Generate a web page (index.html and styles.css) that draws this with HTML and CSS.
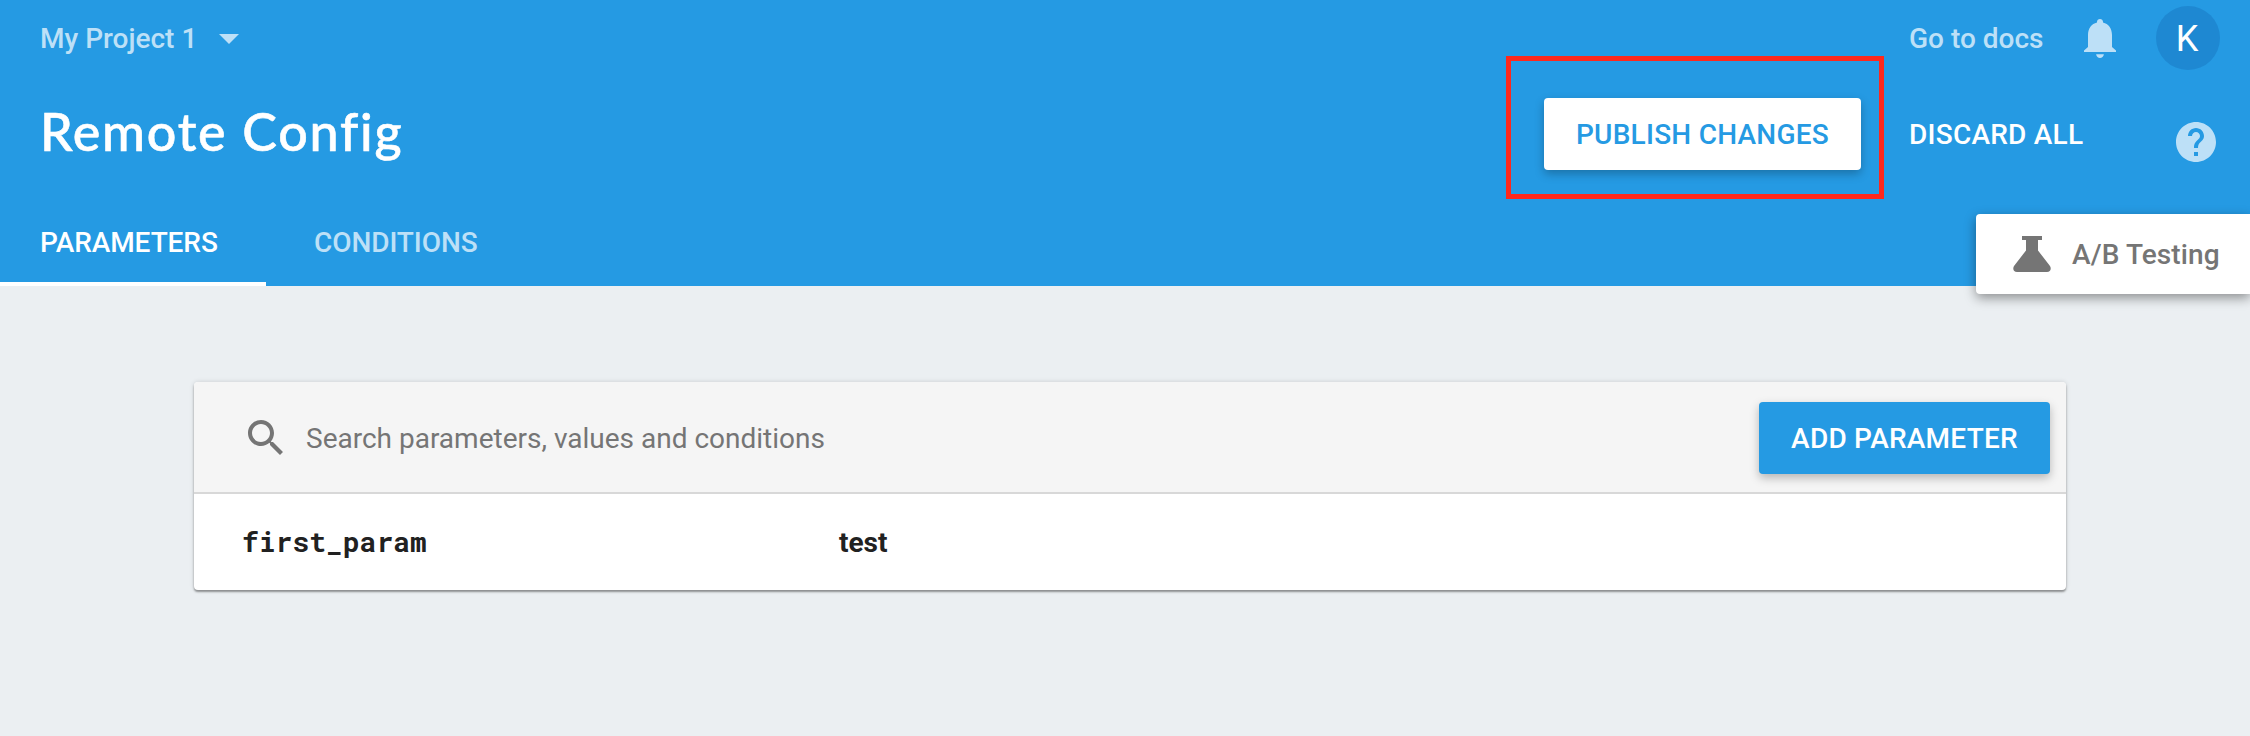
FILE: index.html
```html
<!DOCTYPE html>
<html lang="en">
<head>
<meta charset="utf-8">
<title>Remote Config</title>
<link rel="stylesheet" href="styles.css">
</head>
<body>
<header class="header">
  <div class="topbar">
    <div class="project"><span class="project-name">My Project 1</span><svg class="caret" viewBox="0 0 20 10"><path d="M0 0h20L10 10z"/></svg></div>
    <nav class="account">
      <a class="docs">Go to docs</a>
      <svg class="bell" viewBox="0 0 24 24"><path d="M12 22c.9 0 1.850-.8 1.950-1.850h-3.900C10.150 21.200 11.100 22 12 22zm6-5.500V10.500C18 7.250 16.250 4.900 13.500 4.250V3.900c0-.83-.67-1.400-1.500-1.400s-1.500.57-1.500 1.400v.35C7.750 4.900 6 7.250 6 10.500v6L4 18.250V19h16v-.750z"/></svg>
      <span class="avatar">K</span>
    </nav>
  </div>
  <div class="titlebar">
    <h1 class="title">Remote Config</h1>
    <div class="actions">
      <div class="highlight"><button class="button publish">PUBLISH CHANGES</button></div>
      <button class="discard">DISCARD ALL</button>
      <svg class="help" viewBox="0 0 24 24"><path d="M12 2C6.480 2 2 6.480 2 12s4.480 10 10 10 10-4.480 10-10S17.520 2 12 2zm1 17h-2v-2h2v2zm2.070-7.750l-.9.920C13.450 12.900 13 13.500 13 15h-2v-.5c0-1.100.45-2.100 1.170-2.830l1.240-1.260c.37-.36.59-.86.59-1.410 0-1.100-.9-2-2-2s-2 .9-2 2H8c0-2.210 1.790-4 4-4s4 1.790 4 4c0 .88-.36 1.680-.93 2.250z"/></svg>
    </div>
  </div>
  <nav class="tabs">
    <a class="tab active">PARAMETERS</a>
    <a class="tab">CONDITIONS</a>
  </nav>
  <aside class="ab">
    <svg class="flask" viewBox="0 0 38 36"><path d="M9 0h20v4h-4v10.500l11.800 15.200c2 2.800.6 6.300-2.800 6.300H4c-3.400 0-4.800-3.500-2.800-6.300L13 14.500V4H9z"/></svg>
    <span class="ab-label">A/B Testing</span>
  </aside>
</header>
<main class="main">
  <section class="card">
    <div class="toolbar">
      <svg class="search" viewBox="0 0 24 24"><path d="M15.500 14h-.79l-.28-.27C15.410 12.590 16 11.110 16 9.500 16 5.910 13.090 3 9.500 3S3 5.910 3 9.500 5.910 16 9.500 16c1.610 0 3.090-.59 4.230-1.570l.27.28v.79l5 4.990L20.490 19l-4.990-5zm-6 0C7.010 14 5 11.990 5 9.500S7.010 5 9.500 5 14 7.010 14 9.500 11.990 14 9.500 14z"/></svg>
      <span class="placeholder">Search parameters, values and conditions</span>
      <button class="button add">ADD PARAMETER</button>
    </div>
    <div class="row">
      <span class="key">first_param</span>
      <span class="value">test</span>
    </div>
  </section>
</main>
</body>
</html>
```

FILE: styles.css
```css
* { box-sizing: border-box; }
body {
  margin: 0;
  height: 736px;
  overflow: hidden;
  background: #ebeff2;
  font-family: Roboto, sans-serif;
  font-size: 28px;
  line-height: 36px;
  font-weight: 500;
}
svg { display: block; flex: none; fill: currentColor; }
button { font: inherit; border: 0; padding: 2px 0 0; background: none; white-space: nowrap; letter-spacing: .24px; }

.header {
  position: relative;
  display: flex;
  flex-direction: column;
  height: 286px;
  background: #259ae3;
  color: #fff;
}
.topbar { display: flex; justify-content: space-between; height: 76px; padding: 0 30px 0 40px; }
.project, .account { display: flex; align-items: center; color: #bde0f7; }
.project { gap: 22px; }
.project-name, .docs { padding-top: 2px; }
.caret { width: 20px; height: 10px; margin-top: 2px; }
.account { width: 311px; }
.docs { width: 167px; white-space: nowrap; }
.bell { width: 48px; height: 48px; }
.avatar {
  width: 64px;
  height: 64px;
  margin-left: 32px;
  padding-right: 2px;
  border-radius: 50%;
  background: #1e88d2;
  color: #fff;
  font-size: 36px;
  font-weight: 400;
  line-height: 66px;
  text-align: center;
}
.titlebar { display: flex; justify-content: space-between; height: 122px; padding: 0 30px 0 40px; }
.title {
  margin: 25px 0 0;
  font: 500 52px/60px Lato, sans-serif;
  letter-spacing: 1.75px;
  -webkit-text-stroke: .6px #fff;
  white-space: nowrap;
}
.actions { display: flex; width: 714px; margin-top: -20px; }
.highlight { width: 378px; height: 143px; padding: 37px 0 0 33px; border: 5px solid #ff281c; flex: none; }
.button {
  display: block;
  height: 72px;
  border-radius: 4px;
  box-shadow: 0 4px 10px rgba(0, 0, 0, .26);
}
.publish { width: 317px; background: #fff; color: #259ae3; }
.discard { width: 263px; height: 72px; margin: 42px 0 0 25px; color: #fff; text-align: left; flex: none; }
.help { width: 48px; height: 48px; margin-top: 62px; color: #bde0f7; }

.tabs { display: flex; height: 88px; }
.tab { width: 266px; padding: 27px 0 0 40px; color: #bde0f7; border-bottom: 4px solid transparent; letter-spacing: -.08px; }
.tab + .tab { padding-left: 48px; }
.active { color: #fff; border-color: #fff; }

.ab {
  position: absolute;
  top: 214px;
  right: 0;
  display: flex;
  align-items: center;
  width: 274px;
  height: 80px;
  padding-left: 37px;
  border-radius: 4px 0 0 4px;
  background: #fff;
  color: #757575;
  box-shadow: 0 4px 12px rgba(0, 0, 0, .4);
}
.flask { width: 38px; height: 36px; }
.ab-label { margin-left: 21px; padding-top: 2px; letter-spacing: .1px; white-space: nowrap; }

.main { padding: 96px 184px 0 194px; }
.card {
  height: 208px;
  border-radius: 4px;
  overflow: hidden;
  background: #fff;
  box-shadow: 0 2px 2px rgba(0, 0, 0, .36), 0 0 5px rgba(0, 0, 0, .14);
}
.toolbar {
  display: flex;
  align-items: center;
  height: 112px;
  padding: 2px 16px 0 48px;
  border-bottom: 2px solid #d8d8d8;
  background: #f5f5f5;
}
.search { width: 48px; height: 48px; color: #757575; }
.placeholder { margin-left: 16px; padding-top: 2px; color: #757575; font-weight: 400; }
.add { width: 291px; margin-left: auto; background: #259ae3; color: #fff; }
.row { display: flex; align-items: center; height: 96px; padding-left: 48px; color: #212121; font-weight: 700; }
.key { width: 597px; font-family: "Roboto Mono", "DejaVu Sans Mono", monospace; }
.value { padding-top: 2px; }
```
